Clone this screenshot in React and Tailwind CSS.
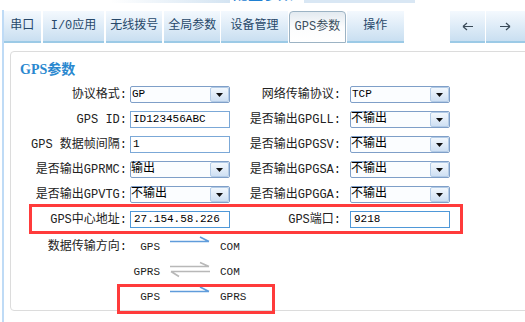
import React from 'react';

const tabs = [
  { label: '串口', cls: 'w-[38px]' },
  { label: 'I/0应用', cls: 'w-[64px] ml-[2px]' },
  { label: '无线拨号', cls: 'w-[58px] ml-[2px]' },
  { label: '全局参数', cls: 'w-[58px] ml-[2px]' },
  { label: '设备管理', cls: 'w-[69px] ml-[1px]' },
  { label: 'GPS参数', cls: 'w-[59px] ml-[1px]', active: true },
  { label: '操作', cls: 'w-[59px] ml-[1px]' },
  { label: 'left', cls: 'w-[37px] ml-[46px]' },
  { label: 'right', cls: 'w-[40px] ml-[1px]' },
];

const Arrow = ({ dir }) => (
  <svg width="11" height="9" viewBox="0 0 11 9" fill="none" stroke="#3a4a58" strokeWidth="1.2">
    {dir === 'left' ? (
      <path d="M1 4.5h10M1 4.5l4-3.5M1 4.5l4 3.5" />
    ) : (
      <path d="M0 4.5h10M10 4.5l-4-3.5M10 4.5l-4 3.5" />
    )}
  </svg>
);

const Tab = ({ tab }) => {
  if (tab.active) {
    return (
      <div className={`${tab.cls} flex items-center justify-center border border-[#9cb3c4] rounded-t-[4px] bg-linear-to-b from-[#e3eaf0] via-[#fbfcfd] to-white text-[12px] text-[#3b4f5e]`}>
        {tab.label}
      </div>
    );
  }
  return (
    <div className={`${tab.cls} flex items-center justify-center border-b-2 border-[#9ccae6] bg-linear-to-b from-[#f4f9fe] to-[#c9dff1] text-[12px] text-[#27486a]`}>
      {tab.label === 'left' ? <Arrow dir="left" /> : tab.label === 'right' ? <Arrow dir="right" /> : tab.label}
    </div>
  );
};

const Select = ({ value, latin }) => (
  <div className="w-[100px] h-[17px] flex border border-[#7f9fc8] rounded-[2px] bg-[#fbfdff]">
    <span className={latin ? 'flex-1 pl-[1px] text-[11px] leading-[15px] text-black' : 'flex-1 text-[12px] leading-[15px] text-black'}>
      {value}
    </span>
    <span className="w-[19px] flex items-center justify-center border border-[#b3cbe6] rounded-[2px] bg-linear-to-b from-[#f3f8fd] to-[#cfe0f3]">
      <svg width="7" height="4" viewBox="0 0 7 4">
        <path d="M0 0h7L3.5 4z" fill="#111" />
      </svg>
    </span>
  </div>
);

const Input = ({ value, focus }) => (
  <div className={focus
    ? 'w-[100px] h-[17px] border border-[#4f98d8] bg-white pl-[3px] text-[11px] leading-[15px] text-black'
    : 'w-[100px] h-[17px] border border-[#7ba8d7] bg-white pl-[2px] text-[11px] leading-[15px] text-black'}>
    {value}
  </div>
);

const rows = [
  ['协议格式:', <Select value="GP" latin />, '网络传输协议:', <Select value="TCP" latin />],
  ['GPS ID:', <Input value="ID123456ABC" />, '是否输出GPGLL:', <Select value="不输出" />],
  ['GPS 数据帧间隔:', <Input value="1" />, '是否输出GPGSV:', <Select value="不输出" />],
  ['是否输出GPRMC:', <Select value="输出" />, '是否输出GPGSA:', <Select value="不输出" />],
  ['是否输出GPVTG:', <Select value="不输出" />, '是否输出GPGGA:', <Select value="不输出" />],
  ['GPS中心地址:', <Input value="27.154.58.226" focus />, 'GPS端口:', <Input value="9218" focus />],
];

// flow rows: from, arrow kind, to
const flows = [
  ['GPS', 'right', 'COM'],
  ['GPRS', 'both', 'COM'],
  ['GPS', 'right', 'GPRS'],
];

const FlowArrow = ({ kind }) => (
  <svg width="40" height="25" viewBox="0 0 40 25" fill="none" className="ml-[10px]">
    {kind === 'both' ? (
      <>
        <path d="M0 6.5h39M39 6.5l-9-4" stroke="#b8b8b8" strokeWidth="1.6" />
        <path d="M1 11.5h39M1 11.5l8 5" stroke="#b8b8b8" strokeWidth="1.6" />
      </>
    ) : (
      <path d="M0 6.5h39M39 6.5l-9-4.5" stroke="#5f9cdb" strokeWidth="1.6" />
    )}
  </svg>
);

export default function App() {
  return (
    <div className="relative w-[525px] h-[322px] overflow-hidden bg-white font-['Liberation_Mono','Noto_Sans_CJK_SC',monospace] text-[#222]">
      {/* cropped page title strip */}
      <div className="h-[10px] overflow-hidden flex items-start">
        <div className="ml-[110px] w-[120px] h-[3px] bg-linear-to-r from-white to-[#d4e4f2]" />
        <div className="ml-[3px] w-[61px] -mt-[15px] text-[15px] leading-[16px] font-bold text-[#1f80d2] font-['Noto_Sans_CJK_SC',sans-serif]">配置参数</div>
        <div className="ml-[10px] w-[111px] h-[3px] bg-[#d9e7f4]" />
      </div>

      <div className="ml-[2px] border-l-2 border-[#bfdbf6] h-[312px] pt-[1px]">
        <div className="flex h-[32px]">
          {tabs.map((t) => (
            <Tab key={t.label} tab={t} />
          ))}
        </div>

        <div className="ml-[6px] mt-[8px] w-[540px] h-[260px] border border-[#dcdcdc] rounded-[4px]">
          <div className="pl-[9px] pt-[10px] text-[14px] leading-[16px] font-bold text-[#2a88cf] font-['Liberation_Serif','Noto_Sans_CJK_SC',serif]">
            GPS参数
          </div>

          <div className="mt-[8px] flex flex-col gap-[8px]">
            {rows.map((r, i) => (
              <div key={i} className="flex items-center h-[17px] text-[12px]">
                <span className="w-[116px] text-right whitespace-nowrap">{r[0]}</span>
                <div className="ml-[3px]">{r[1]}</div>
                <span className="w-[111px] text-right whitespace-nowrap">{r[2]}</span>
                <div className="ml-[9px]">{r[3]}</div>
              </div>
            ))}
          </div>

          <div className="mt-[7px] flex">
            <span className="w-[116px] h-[25px] leading-[25px] text-right text-[12px]">数据传输方向:</span>
            <div className="flex flex-col">
              {flows.map((f, i) => (
                <div key={i} className="flex items-center h-[25px] text-[11px]">
                  <span className="w-[33px] text-right">{f[0]}</span>
                  <FlowArrow kind={f[1]} />
                  <span className="ml-[10px]">{f[2]}</span>
                </div>
              ))}
            </div>
          </div>
        </div>
      </div>

      {/* red annotation frames */}
      <div className="absolute left-[29px] top-[204px] w-[434px] h-[30px] border-[3px] border-[#ff3b3b]" />
      <div className="absolute left-[117px] top-[284px] w-[158px] h-[30px] border-[3px] border-[#ff3b3b]" />
    </div>
  );
}
